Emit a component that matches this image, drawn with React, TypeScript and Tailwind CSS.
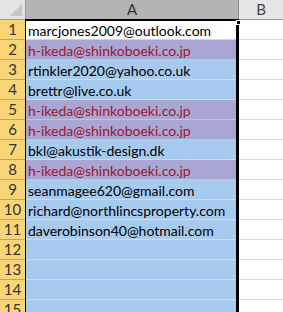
const rows: { text: string; dup?: boolean }[] = [
  { text: "marcjones2009@outlook.com" },
  { text: "h-ikeda@shinkoboeki.co.jp", dup: true },
  { text: "rtinkler2020@yahoo.co.uk" },
  { text: "brettr@live.co.uk" },
  { text: "h-ikeda@shinkoboeki.co.jp", dup: true },
  { text: "h-ikeda@shinkoboeki.co.jp", dup: true },
  { text: "bkl@akustik-design.dk" },
  { text: "h-ikeda@shinkoboeki.co.jp", dup: true },
  { text: "seanmagee620@gmail.com" },
  { text: "richard@northlincsproperty.com" },
  { text: "daverobinson40@hotmail.com" },
  { text: "" },
  { text: "" },
  { text: "" },
  { text: "" },
];

const App = () => {
  return (
    <div
      className="relative w-[283px] h-[312px] overflow-hidden bg-white"
      style={{ fontFamily: "Lato, 'Liberation Sans', sans-serif" }}
    >
      {/* column headers */}
      <div className="flex h-[20px]">
        <div className="relative w-[26px] h-full bg-[#e4e4e4] border-r border-b border-[#9a9a9a]">
          <svg className="absolute right-[3px] bottom-[3px]" width="12" height="12" viewBox="0 0 12 12">
            <polygon points="12,0 12,12 0,12" fill="#c6c6c6" />
          </svg>
        </div>
        <div className="w-[213px] h-full bg-[#b4b4b4] border-r border-b border-[#8a8a8a] flex items-center justify-center text-[15px] text-[#333]">
          A
        </div>
        <div className="flex-1 h-full bg-[#e6e6e6] border-b border-[#9a9a9a] flex items-center justify-center text-[15px] text-[#444]">
          B
        </div>
      </div>

      {rows.map((r, i) => (
        <div key={i} className="flex h-[20px]">
          <div className="w-[26px] h-full bg-[#f8d678] border-r border-b border-[#c7a548] flex items-center justify-center text-[15px] text-[#333]">
            {i + 1}
          </div>
          <div
            className={
              "w-[213px] h-full border-b pl-[2px] pt-[1px] flex items-center text-[14px] whitespace-nowrap overflow-hidden " +
              (i === 0
                ? "bg-white border-[#d4d4d4] text-black"
                : r.dup
                ? "bg-[#aaa6d3] border-[#c4c2e2] text-[#9c1530]"
                : "bg-[#a6cbef] border-[#c6ddf3] text-black")
            }
          >
            {r.text}
          </div>
          <div className="flex-1 h-full border-b border-[#d9d9d9]" />
        </div>
      ))}

      {/* selection outline over column A */}
      <div className="absolute left-[25px] top-[19px] w-[214px] h-[300px] border-l border-t-2 border-r-[3px] border-black pointer-events-none" />
      <div className="absolute left-[236px] top-[20px] w-[5px] h-[5px] bg-black border border-white" />
    </div>
  );
};

export default App;
